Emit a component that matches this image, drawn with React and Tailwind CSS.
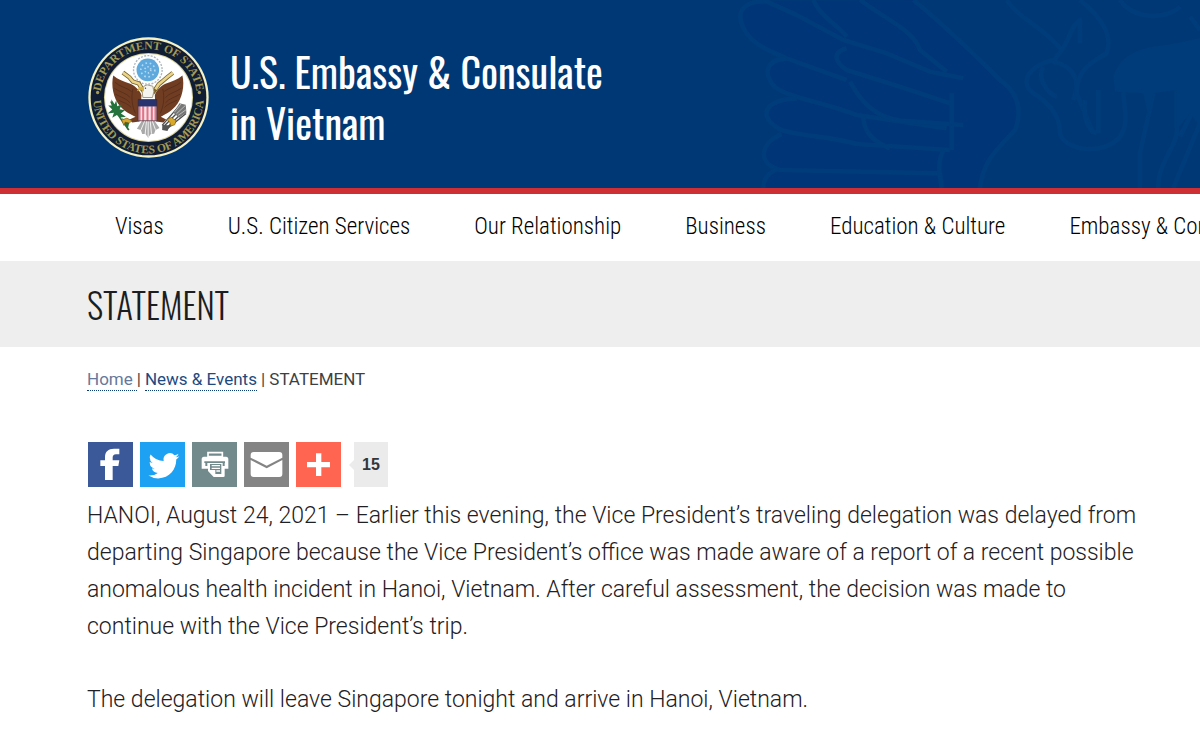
const navItems = [
  "Visas",
  "U.S. Citizen Services",
  "Our Relationship",
  "Business",
  "Education & Culture",
  "Embassy & Consulates",
];

function Seal() {
  return (
    <svg
      className="w-[121px] h-[121px] shrink-0"
      viewBox="25 20 364 364"
      role="img"
      aria-label="Department of State seal"
    >
      <defs>
        <path id="sealTop" d="M64 226A145 145 0 1 1 350 226" />
        <path id="sealBottom" d="M42 186A166 166 0 1 0 372 186" />
      </defs>
      <circle cx="207" cy="202" r="181" fill="#f4f1c4" />
      <circle cx="207" cy="202" r="174" fill="#111d33" />
      <circle cx="207" cy="202" r="134" fill="#d8d3a0" />
      <circle cx="207" cy="202" r="131" fill="#fff" />
      <g fill="#a39a55" fontFamily="Liberation Serif, serif" fontWeight="700">
        <text textAnchor="middle" fontSize="35">
          <textPath href="#sealTop" startOffset="50%">DEPARTMENT OF STATE</textPath>
        </text>
        <text textAnchor="middle" fontSize="35">
          <textPath href="#sealBottom" startOffset="50%">UNITED STATES OF AMERICA</textPath>
        </text>
        <circle cx="54" cy="187" r="5" />
        <circle cx="360" cy="187" r="5" />
      </g>

      {/* glory above the eagle */}
      <circle cx="205" cy="119" r="43" fill="#fff" stroke="#aab4bd" strokeWidth="4" strokeDasharray="6 4" />
      <circle cx="205" cy="119" r="34" fill="#5fa9dc" />
      <circle cx="205" cy="119" r="21" fill="none" stroke="#b4dcf5" strokeWidth="5" strokeDasharray="5 8" />
      <circle cx="205" cy="119" r="9" fill="none" stroke="#b4dcf5" strokeWidth="5" strokeDasharray="4 6" />

      {/* tail */}
      <path d="M190 268L172 296L184 300L188 312L198 312L206 323L214 312L224 311L228 300L240 294L222 268Z" fill="#a9a9a9" />
      <path d="M196 272L184 300M201 272L197 312M206 272V321M212 272L216 311M218 272L228 299" stroke="#f2f2f2" strokeWidth="3" />

      {/* wings */}
      <path
        d="M101 136C94 165 100 205 123 230C137 246 155 254 168 260L150 268L158 277L180 274L186 195C180 178 164 166 150 160C133 154 115 148 101 136Z"
        fill="#713d22"
      />
      <path
        d="M309 136C316 165 310 205 287 230C273 246 255 254 244 260L260 268L252 277L230 274L226 195C232 178 246 166 260 160C277 154 295 148 309 136Z"
        fill="#713d22"
      />
      <g fill="none" stroke="#4d2a19" strokeWidth="2">
        <path d="M106 156C120 170 142 172 156 184M104 174C120 186 140 188 152 202M108 192C124 202 140 204 152 218M117 210C132 218 145 220 155 232M160 176C154 204 158 230 168 250" />
        <path d="M304 156C290 170 268 172 254 184M306 174C290 186 270 188 258 202M302 192C286 202 270 204 258 218M293 210C278 218 265 220 255 232M250 176C256 204 252 230 242 250" />
      </g>

      {/* ribbon and head */}
      <path
        d="M130 127L150 142L160 154L178 160L188 177L198 190M280 128L262 142L248 154L238 162L228 177L218 190"
        fill="none"
        stroke="#79622a"
        strokeWidth="13"
      />
      <path
        d="M130 127L150 142L160 154L178 160L188 177M280 128L262 142L248 154L238 162L228 177"
        fill="none"
        stroke="#ead489"
        strokeWidth="8"
      />
      <path d="M190 202L188 184L193 168L203 164L220 168L223 184L219 202Z" fill="#f5f4ef" stroke="#a49b83" strokeWidth="3" />
      <path d="M194 170L178 172L172 183L183 179L193 184Z" fill="#d8b33e" />
      <circle cx="198" cy="174" r="2" fill="#333" />

      {/* shield */}
      <path d="M176 228H232V272H176Z" fill="#f7dfe2" />
      <path d="M180 228V272M191 228V272M204 228V272M217 228V272M228 228V272" stroke="#df7189" strokeWidth="6" />
      <path d="M176 208H232V229H176Z" fill="#26336e" />
      <path d="M176 208H232V272H176Z" fill="none" stroke="#3b2633" strokeWidth="2" />

      {/* olive branch */}
      <path d="M94 214C104 242 126 270 148 300" fill="none" stroke="#2f6c39" strokeWidth="5" />
      <path
        d="M95 207L105 222L110 210L113 228L127 222L120 237L136 240L124 250L139 260L123 262L112 255L98 263L103 248L84 250L98 238L86 226L97 226Z"
        fill="#24733c"
      />
      <path d="M127 264L149 278L144 300L137 284Z" fill="#24733c" />
      <path d="M126 270L142 264L157 272L149 279L137 276L133 286Z" fill="#d8aa2c" stroke="#77581b" strokeWidth="2" />

      {/* arrows */}
      <path d="M250 292L315 226M257 298L318 238M248 286L304 222M263 296L320 250" stroke="#4c4c4c" strokeWidth="4" />
      <path d="M282 248L300 219L319 224L321 248L299 263Z" fill="#777" />
      <path d="M285 246L306 220M291 251L318 226M296 256L321 238" stroke="#ddd" strokeWidth="2" />
      <path d="M249 284L272 286L264 303L248 300Z" fill="#555" />
      <path d="M262 268L276 262L290 272L286 284L274 288L271 276Z" fill="#d8aa2c" stroke="#77581b" strokeWidth="2" />
    </svg>
  );
}

function EagleWatermark() {
  return (
    <svg
      className="absolute right-0 top-0 w-[500px] h-full"
      viewBox="0 0 1500 564"
      preserveAspectRatio="xMaxYMin slice"
      fill="none"
      aria-hidden="true"
    >
      <path
        d="M200 5C140 0 110 30 125 70C140 125 200 150 260 175C200 180 195 220 215 250C225 280 260 290 300 300C200 300 175 340 210 370C230 390 240 395 250 402C180 440 180 480 235 505C195 520 190 540 190 564H830C850 480 900 450 945 390C970 320 940 270 900 240C830 170 750 90 640 0Z"
        fill="#003577"
      />
      <g stroke="#003c79" strokeWidth="14" strokeLinejoin="round">
        <path d="M200 5C140 0 110 30 125 70C140 125 200 150 260 175L440 240" />
        <path d="M190 0L290 45L430 120L560 160L690 215L790 235" />
        <path d="M340 0C360 50 420 80 440 110" />
        <path d="M480 0C560 60 640 90 660 150L740 215" />
        <path d="M640 0C750 90 830 170 900 240C970 290 960 350 945 390C890 450 850 480 840 564" />
        <path d="M440 145C390 160 410 190 440 210L600 260L750 310" />
        <path d="M260 175C195 180 195 220 215 250C240 290 350 300 470 345L740 385" />
        <path d="M450 245C480 300 520 350 600 362L790 375" />
        <path d="M290 295C190 300 175 350 235 385C260 405 400 410 470 432L750 450" />
        <path d="M490 350C490 400 530 430 570 445" />
        <path d="M245 402C180 430 170 490 240 510L720 520C725 540 725 564 725 564" />
        <path d="M235 505C200 520 190 545 190 564" />
        <path d="M755 280V450M730 450C710 490 720 530 725 564" />
        <path d="M920 0C960 60 1030 80 1085 150L1060 185C1130 200 1140 250 1120 300M1085 150C1110 120 1110 80 1140 60V130" />
        <path d="M1140 0C1200 50 1240 100 1220 160C1170 190 1130 210 1130 280L1180 400M1060 180C980 200 960 250 1000 280C1050 310 1080 350 1080 400C1090 450 1210 470 1260 410C1290 370 1270 320 1270 270" />
        <path d="M1155 300C1150 350 1160 390 1190 400M1195 270V400M1030 200C1010 230 1040 280 1070 290M1260 0C1300 60 1400 60 1440 20M1470 50L1500 90" />
        <path d="M1360 280L1320 460V564M1430 270V380C1440 430 1370 490 1375 564M1500 370L1420 564M1490 310L1440 410" />
      </g>
      <path d="M1240 230C1260 160 1330 140 1400 135L1500 115V380L1470 340L1430 390V270L1360 280L1345 350L1330 280L1245 275Z" fill="#003c79" />
    </svg>
  );
}

function ShareBar() {
  return (
    <div className="flex items-center gap-[7px]">
      <button aria-label="Facebook" className="size-[45px] bg-[#3b5998]">
        <svg viewBox="0 0 135 135" fill="#fff" aria-hidden="true">
          <path d="M51 114V72H37V55H51V45C51 29 61 20 78 20H94V37H84C77 37 74 41 74 47V55H94L91 72H74V114Z" />
        </svg>
      </button>
      <button aria-label="Twitter" className="size-[45px] bg-[#1da1f2]">
        <svg viewBox="0 0 32 32" fill="#fff" aria-hidden="true">
          <path d="M27.996 10.116c-.81.36-1.68.602-2.592.71a4.526 4.526 0 0 0 1.984-2.496 9.037 9.037 0 0 1-2.866 1.095 4.513 4.513 0 0 0-7.69 4.116 12.81 12.81 0 0 1-9.3-4.715 4.49 4.49 0 0 0-.612 2.27 4.51 4.51 0 0 0 2.008 3.755 4.495 4.495 0 0 1-2.044-.564v.057a4.515 4.515 0 0 0 3.62 4.425 4.52 4.52 0 0 1-2.04.077 4.517 4.517 0 0 0 4.217 3.134 9.055 9.055 0 0 1-5.604 1.93A9.18 9.18 0 0 1 6 23.85a12.773 12.773 0 0 0 6.918 2.027c8.3 0 12.84-6.876 12.84-12.84 0-.195-.005-.39-.014-.583a9.172 9.172 0 0 0 2.252-2.336" />
        </svg>
      </button>
      <button aria-label="Print" className="size-[45px] bg-[#738a8d]">
        <svg viewBox="0 0 135 135" aria-hidden="true">
          <path d="M48 32H91V44H48Z" fill="#738a8d" stroke="#fff" strokeWidth="5" />
          <path d="M36 44H102Q109 44 109 52V80H98V102Q98 105 94 105H65L48 87V80H29V52Q29 44 36 44Z" fill="#fff" />
          <path d="M37 58H99V63H37ZM40 63H46V72H40ZM92 63H98V72H92Z" fill="#738a8d" />
          <path d="M54 66H88V96H70V84H54Z" fill="#738a8d" />
          <path d="M59 71H84M59 79H84M73 87H84" stroke="#fff" strokeWidth="4" />
        </svg>
      </button>
      <button aria-label="Email" className="size-[45px] bg-[#848484]">
        <svg viewBox="0 0 135 135" fill="#fff" aria-hidden="true">
          <path d="M20 39Q20 30 29 30H106Q115 30 115 39V47L68 71L20 47Z" />
          <path d="M20 54L68 79L115 54V96Q115 105 106 105H29Q20 105 20 96Z" />
        </svg>
      </button>
      <button aria-label="More" className="size-[45px] bg-[#ff6550]">
        <svg viewBox="0 0 135 135" fill="#fff" aria-hidden="true">
          <path d="M60 34H76V60H102V76H76V102H60V76H33V60H60Z" />
        </svg>
      </button>
      <div className="flex items-center">
        <svg className="w-[6px] h-[10px]" viewBox="0 0 6 10" aria-hidden="true">
          <path d="M6 0V10L1 5Z" fill="#ebebeb" />
        </svg>
        <span className="flex h-[45px] w-[34px] items-center justify-center bg-[#ebebeb] font-['Liberation_Sans',sans-serif] text-base font-bold text-[#32363b]">
          15
        </span>
      </div>
    </div>
  );
}

export default function App() {
  return (
    <div className="min-h-screen overflow-x-hidden bg-white font-[Roboto,sans-serif] text-[#3e3f42]">
      {/* Header */}
      <header className="relative border-b-[6px] border-[#cd2f34] bg-[#003875]">
        <EagleWatermark />
        <div className="relative flex h-[188px] items-center gap-[21px] pt-[6px] pl-[88px]">
          <Seal />
          <h1 className="font-[Oswald,'Liberation_Sans_Narrow',sans-serif] text-[40px] leading-[51px] font-normal text-white">
            U.S. Embassy & Consulate
            <br />
            in Vietnam
          </h1>
        </div>
      </header>

      {/* Main menu */}
      <nav className="flex h-[67px] items-center gap-16 overflow-hidden pl-[115px]">
        {navItems.map((item) => (
          <a
            key={item}
            href="#"
            className="font-['Roboto_Condensed','Liberation_Sans_Narrow',sans-serif] text-[23px] font-light whitespace-nowrap text-black"
          >
            {item}
          </a>
        ))}
      </nav>

      {/* Page title */}
      <div className="flex h-[86px] items-center bg-[#eee] pl-[87px]">
        <h2 className="font-[Oswald,'Liberation_Sans_Narrow',sans-serif] text-[35px] font-light text-[#1c1d20]">
          STATEMENT
        </h2>
      </div>

      <main className="px-[87px]">
        <div className="flex pt-5 text-[17px] leading-6">
          <a href="#" className="h-6 border-b border-dotted border-[#0a3d78] pr-1 text-[#66799b]">
            Home
          </a>
          <span className="pr-1">|</span>
          <a href="#" className="h-6 border-b border-dotted border-[#0a3d78] text-[#1d4a80]">
            News & Events
          </a>
          <span className="pl-1">| STATEMENT</span>
        </div>

        <div className="pt-[51px] pl-px">
          <ShareBar />
        </div>

        <article className="-mr-8 flex flex-col gap-9 pt-[10px] text-[23px] leading-[37px] font-light text-[#1f2023]">
          <p>
            HANOI, August 24, 2021 – Earlier this evening, the Vice President’s traveling delegation was delayed from
            departing Singapore because the Vice President’s office was made aware of a report of a recent possible
            anomalous health incident in Hanoi, Vietnam. After careful assessment, the decision was made to continue
            with the Vice President’s trip.
          </p>
          <p>The delegation will leave Singapore tonight and arrive in Hanoi, Vietnam.</p>
        </article>
      </main>
    </div>
  );
}
